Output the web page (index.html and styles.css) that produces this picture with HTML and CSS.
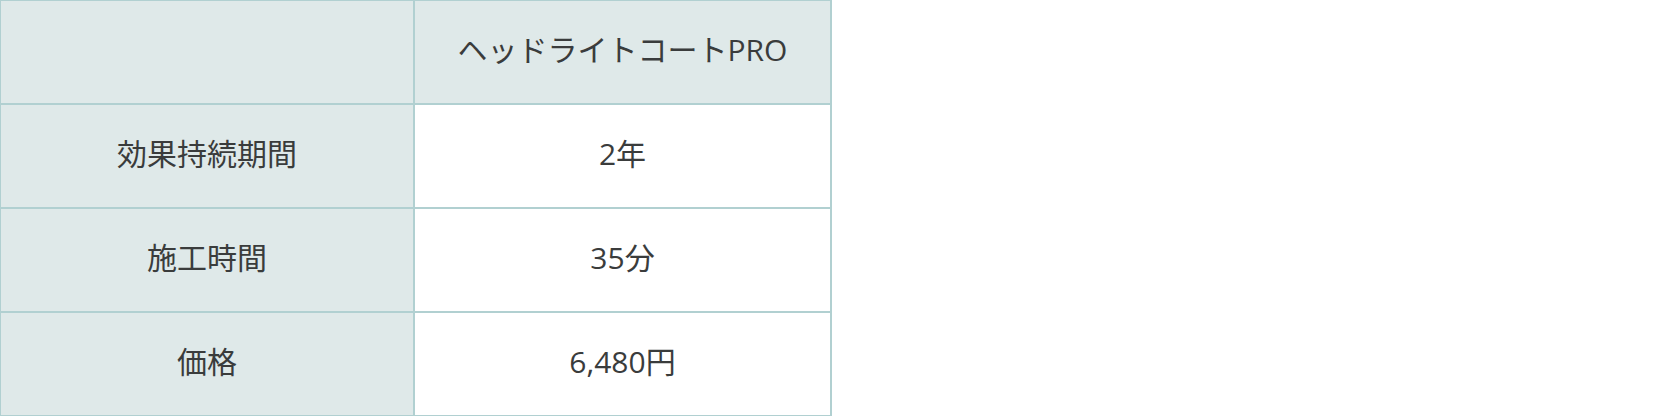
FILE: index.html
```html
<!DOCTYPE html>
<html lang="ja">
<head>
<meta charset="utf-8">
<title>ヘッドライトコートPRO</title>
<link rel="stylesheet" href="styles.css">
</head>
<body>
<table class="spec">
  <colgroup>
    <col class="col-label">
    <col class="col-value">
  </colgroup>
  <tbody>
    <tr>
      <th class="head"></th>
      <th class="head">ヘッドライトコートPRO</th>
    </tr>
    <tr>
      <th class="head">効果持続期間</th>
      <td class="val">2年</td>
    </tr>
    <tr>
      <th class="head">施工時間</th>
      <td class="val">35分</td>
    </tr>
    <tr>
      <th class="head">価格</th>
      <td class="val">6,480円</td>
    </tr>
  </tbody>
</table>
</body>
</html>
```

FILE: styles.css
```css
html, body {
  margin: 0;
  padding: 0;
  background: #ffffff;
}

.spec {
  width: 832px;
  border-collapse: separate;
  border-spacing: 0;
  table-layout: fixed;
  border-right: 1px solid #b1d0d1;
  border-bottom: 1px solid #b1d0d1;
  font-family: "Open Sans", "Noto Sans CJK JP", sans-serif;
  font-size: 30px;
  color: #3a3c3c;
}

.col-label {
  width: 414px;
}

.spec th,
.spec td {
  box-sizing: border-box;
  height: 104px;
  padding: 0 0 4px 0;
  border: 1px solid #b1d0d1;
  text-align: center;
  vertical-align: middle;
  font-weight: 400;
  line-height: 1.2;
}

.spec .head {
  background: #dfe9e9;
}

.spec .val {
  background: #ffffff;
}
```
